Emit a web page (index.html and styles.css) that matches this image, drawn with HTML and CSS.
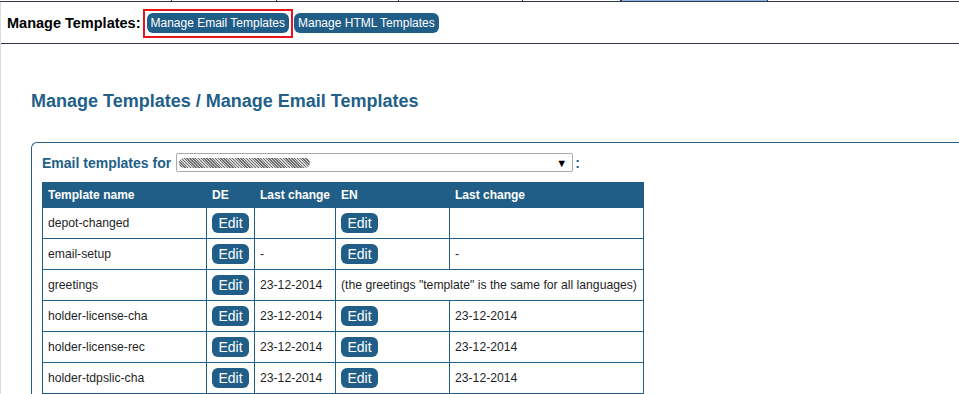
FILE: index.html
```html
<!DOCTYPE html>
<html>
<head>
<meta charset="utf-8">
<link rel="stylesheet" href="styles.css">
</head>
<body>
<div class="tabstrip">
  <div class="tab t1"></div>
  <div class="tab t2"></div>
  <div class="tab t3"></div>
  <div class="tab t4"></div>
  <div class="tab t5"></div>
  <div class="tab active"></div>
  <div class="tab rest"></div>
</div>
<div class="page">
  <div class="topbar">
    <span class="topbar-label">Manage Templates:</span>
    <span class="selected-wrap"><a class="pill">Manage Email Templates</a></span>
    <a class="pill second">Manage HTML Templates</a>
  </div>
  <div class="content">
    <h1 class="title">Manage Templates / Manage Email Templates</h1>
    <div class="panel">
      <div class="for-row">
        <span class="for-label">Email templates for</span>
        <div class="fake-select"><span class="scribble"></span><span class="arrow">&#9660;</span></div>
        <span class="colon">:</span>
      </div>
      <table class="tpl">
        <thead>
          <tr>
            <th class="c-name">Template name</th>
            <th class="c-de">DE</th>
            <th class="c-lc1">Last change</th>
            <th class="c-en">EN</th>
            <th class="c-lc2">Last change</th>
          </tr>
        </thead>
        <tbody>
          <tr><td>depot-changed</td><td><span class="edit">Edit</span></td><td></td><td><span class="edit">Edit</span></td><td></td></tr>
          <tr><td>email-setup</td><td><span class="edit">Edit</span></td><td>-</td><td><span class="edit">Edit</span></td><td>-</td></tr>
          <tr><td>greetings</td><td><span class="edit">Edit</span></td><td>23-12-2014</td><td colspan="2">(the greetings "template" is the same for all languages)</td></tr>
          <tr><td>holder-license-cha</td><td><span class="edit">Edit</span></td><td>23-12-2014</td><td><span class="edit">Edit</span></td><td>23-12-2014</td></tr>
          <tr><td>holder-license-rec</td><td><span class="edit">Edit</span></td><td>23-12-2014</td><td><span class="edit">Edit</span></td><td>23-12-2014</td></tr>
          <tr><td>holder-tdpslic-cha</td><td><span class="edit">Edit</span></td><td>23-12-2014</td><td><span class="edit">Edit</span></td><td>23-12-2014</td></tr>
        </tbody>
      </table>
    </div>
  </div>
</div>
</body>
</html>
```
FILE: styles.css
```css
html, body {
  margin: 0;
  padding: 0;
  background: #ffffff;
  font-family: "Liberation Sans", Arial, sans-serif;
  color: #222222;
}
body {
  height: 394px;
  overflow: hidden;
}

.tabstrip {
  display: flex;
  height: 1px;
  border-bottom: 1px solid #2e3647;
}
.tab { height: 1px; background: #ffffff; border-right: 1px solid #2e3647; }
.t1 { width: 171px; }
.t2 { width: 104px; }
.t3 { width: 121px; }
.t4 { width: 123px; }
.t5 { width: 97px; }
.tab.active { width: 145px; background: #8db8ea; border-left: 1px solid #2e3647; }
.tab.rest { flex: 1; border-right: none; }

.page {
  border-left: 1px solid #dcdcdc;
  height: 392px;
  overflow: hidden;
}

.topbar {
  display: flex;
  align-items: flex-start;
  height: 42px;
  padding-left: 6px;
  border-bottom: 1px solid #323a4a;
  box-sizing: border-box;
}
.topbar-label {
  font-weight: bold;
  font-size: 14.5px;
  color: #000000;
  margin-top: 13px;
  line-height: 17px;
}
.selected-wrap {
  display: inline-flex;
  border: 2px solid #e8141b;
  padding: 2px 2px 3px 2px;
  margin-top: 7px;
  margin-left: 2px;
}
.pill {
  display: inline-block;
  background: #215e87;
  color: #ffffff;
  font-size: 12px;
  line-height: 20px;
  height: 20px;
  padding: 0 4px;
  border-radius: 6px;
  white-space: nowrap;
}
.pill.second {
  margin-top: 11px;
  margin-left: 1px;
}

.content {
  padding-left: 30px;
}
.title {
  margin: 47px 0 0 0;
  font-size: 18px;
  font-weight: bold;
  color: #225f89;
  line-height: 21px;
}

.panel {
  margin-top: 30px;
  border-top: 1px solid #225f89;
  border-left: 1px solid #225f89;
  border-top-left-radius: 6px;
  padding: 10px 0 0 10px;
  height: 300px;
}

.for-row {
  display: flex;
  align-items: center;
  height: 19px;
}
.for-label {
  font-weight: bold;
  font-size: 14px;
  color: #225f89;
  margin-right: 5px;
}
.fake-select {
  display: flex;
  align-items: center;
  width: 395px;
  height: 17px;
  border: 1px solid #a9a9a9;
  border-radius: 2px;
}
.scribble {
  display: inline-block;
  width: 131px;
  height: 10px;
  margin-left: 2px;
  border-radius: 5px;
  background:
    repeating-linear-gradient(45deg, #6e6e6e 0 1px, #d6d6d6 1px 2px),
    #999999;
}
.arrow {
  font-size: 11px;
  color: #000000;
  margin-left: auto;
  margin-right: 5px;
}
.colon {
  font-weight: bold;
  font-size: 14px;
  color: #225f89;
  margin-left: 2px;
}

.tpl {
  margin-top: 10px;
  border-collapse: collapse;
  font-size: 12.2px;
  table-layout: fixed;
  width: 601px;
}
.tpl th {
  background: #215e87;
  color: #ffffff;
  font-weight: bold;
  font-size: 12px;
  text-align: left;
  height: 24px;
  padding: 0 5px;
  border: 1px solid #215e87;
  white-space: nowrap;
}
.tpl td {
  height: 30px;
  padding: 0 5px;
  border: 1px solid #215e87;
  white-space: nowrap;
  color: #1f1f1f;
  vertical-align: middle;
}
.c-name { width: 153px; }
.c-de { width: 37px; }
.c-lc1 { width: 70px; }
.c-en { width: 103px; }
.c-lc2 { width: 183px; }

.edit {
  display: inline-block;
  width: 37px;
  height: 20px;
  line-height: 20px;
  text-align: center;
  background: #215e87;
  color: #ffffff;
  font-size: 14px;
  border-radius: 6px;
  vertical-align: middle;
}
```
